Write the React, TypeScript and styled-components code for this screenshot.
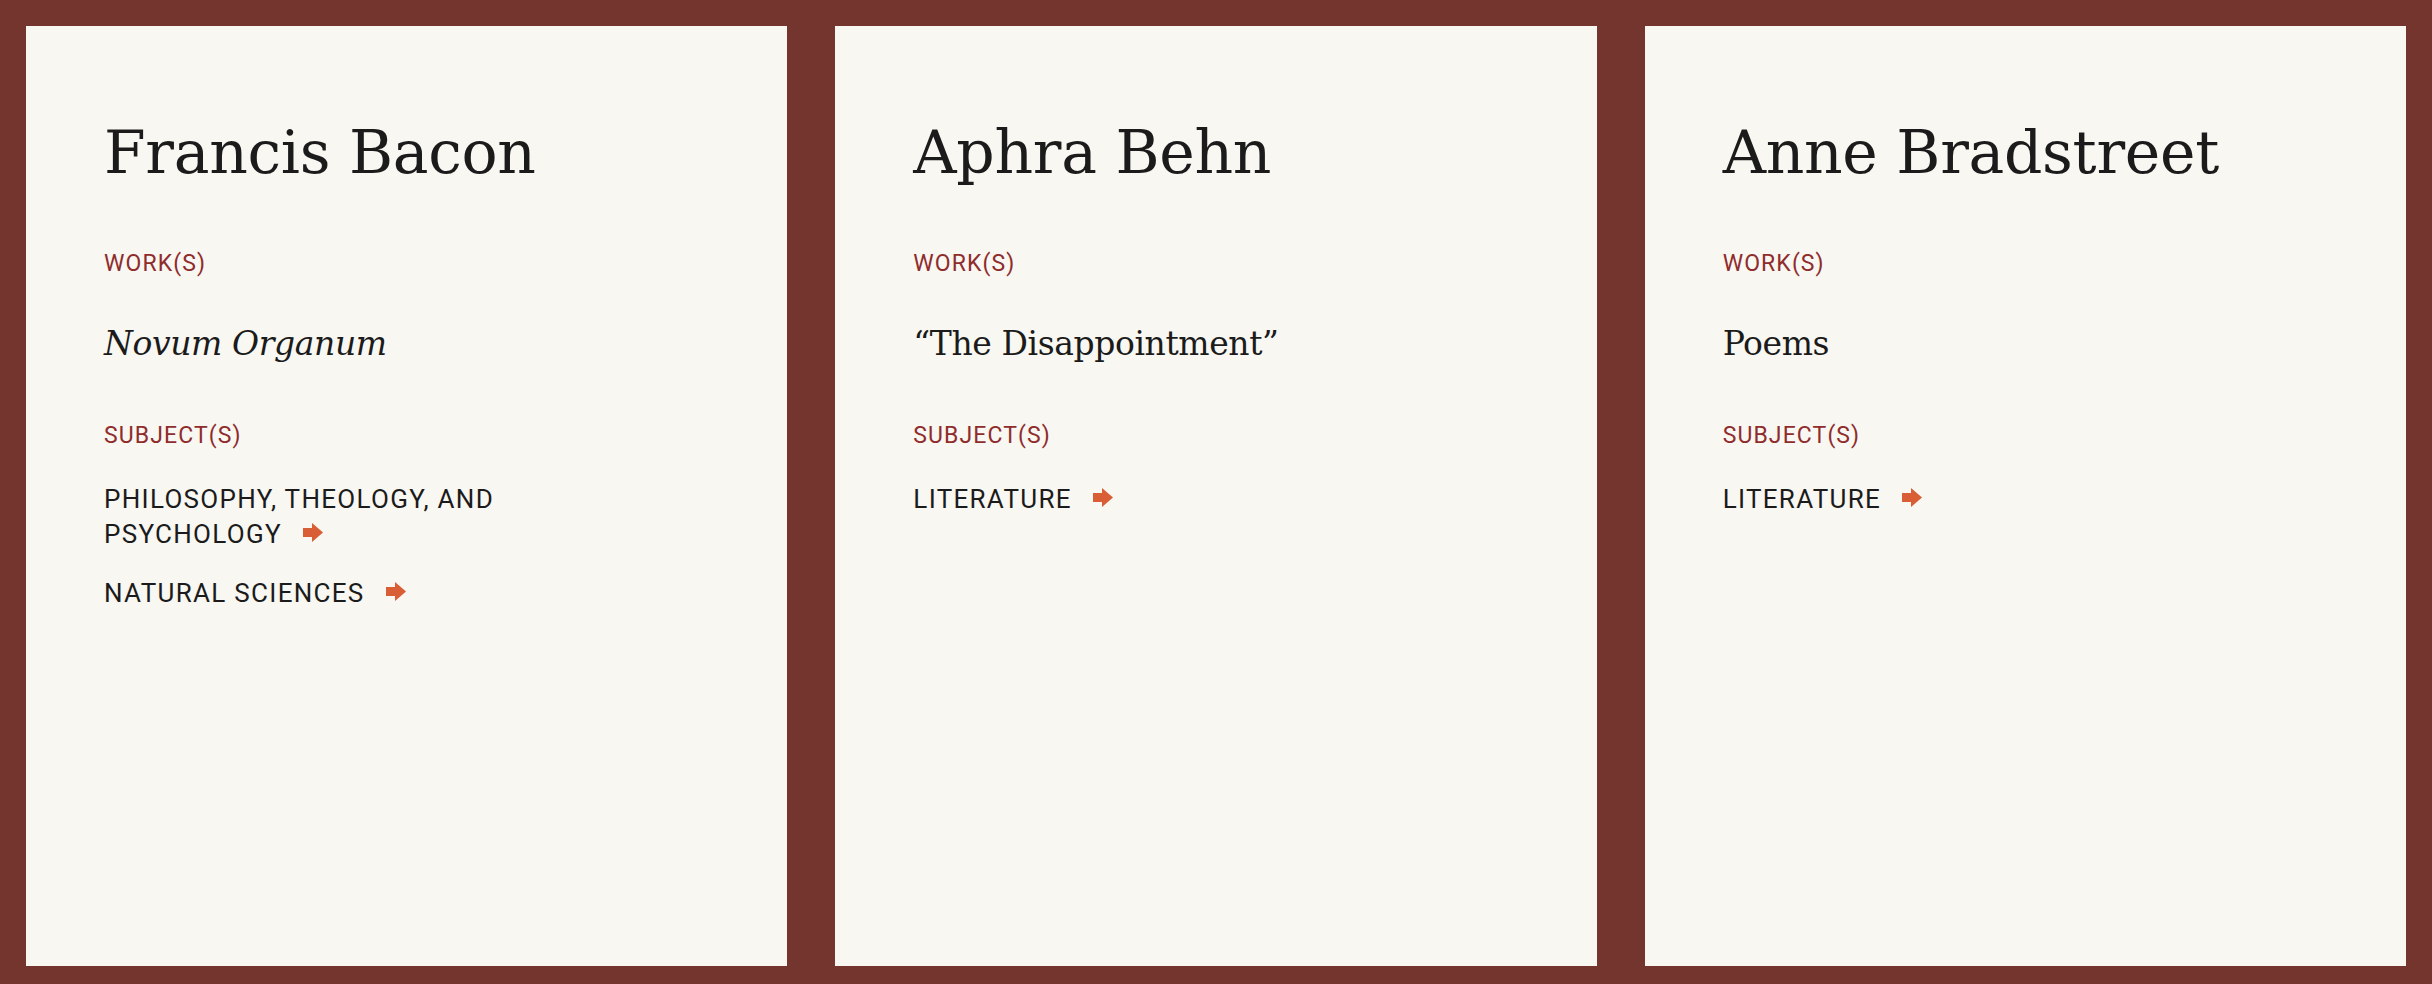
import React from "react";
import styled, { createGlobalStyle } from "styled-components";

const GlobalStyle = createGlobalStyle`
  html, body {
    margin: 0;
    padding: 0;
    background: #74352e;
  }
  * { box-sizing: border-box; }
`;

const Grid = styled.main`
  display: grid;
  grid-template-columns: repeat(3, 1fr);
  gap: 48px;
  height: 100vh;
  padding: 26px 26px 18px;
`;

const Card = styled.article`
  background: #f8f7f2;
  padding: 96px 78px 40px;
  color: #1b1b1b;
`;

const Name = styled.h2`
  margin: 0;
  font-family: "DejaVu Serif", "Liberation Serif", serif;
  font-weight: 400;
  font-size: 60px;
  line-height: 1;
  letter-spacing: -0.3px;
`;

const Label = styled.div<{ $gap: number }>`
  margin-top: ${(p) => p.$gap}px;
  font-family: Roboto, "Liberation Sans", sans-serif;
  font-size: 23px;
  line-height: 1;
  letter-spacing: 1.1px;
  text-transform: uppercase;
  color: #8f2c2c;
`;

const Work = styled.div<{ $italic?: boolean }>`
  margin-top: 52px;
  font-family: "DejaVu Serif", "Liberation Serif", serif;
  font-size: 33px;
  line-height: 1;
  letter-spacing: -0.4px;
  font-style: ${(p) => (p.$italic ? "italic" : "normal")};
`;

const Subjects = styled.ul`
  list-style: none;
  margin: 35px 0 0;
  padding: 0;
  display: flex;
  flex-direction: column;
  gap: 24px;
`;

const Subject = styled.li`
  max-width: 430px;
  font-family: Roboto, "Liberation Sans", sans-serif;
  font-size: 26px;
  line-height: 35px;
  letter-spacing: 1.3px;
  text-transform: uppercase;
  color: #1b1b1b;
`;

const Arrow = styled.svg`
  display: inline-block;
  width: 20px;
  height: 19px;
  margin-left: 21px;
  vertical-align: 1px;
  fill: #d95d35;
`;

type Person = {
  name: string;
  work: string;
  italic?: boolean;
  subjects: string[];
};

const people: Person[] = [
  {
    name: "Francis Bacon",
    work: "Novum Organum",
    italic: true,
    subjects: ["Philosophy, Theology, and Psychology", "Natural Sciences"],
  },
  {
    name: "Aphra Behn",
    work: "\u201CThe Disappointment\u201D",
    subjects: ["Literature"],
  },
  {
    name: "Anne Bradstreet",
    work: "Poems",
    subjects: ["Literature"],
  },
];

const ArrowIcon = () => (
  <Arrow viewBox="0 0 20 19" aria-hidden="true">
    <polygon points="0,5 9,5 9,0 20,9.5 9,19 9,14 0,14" />
  </Arrow>
);

export default function App() {
  return (
    <>
      <GlobalStyle />
      <Grid>
        {people.map((p) => (
          <Card key={p.name}>
            <Name>{p.name}</Name>
            <Label $gap={70}>Work(s)</Label>
            <Work $italic={p.italic}>{p.work}</Work>
            <Label $gap={64}>Subject(s)</Label>
            <Subjects>
              {p.subjects.map((s) => (
                <Subject key={s}>
                  {s}
                  <ArrowIcon />
                </Subject>
              ))}
            </Subjects>
          </Card>
        ))}
      </Grid>
    </>
  );
}
